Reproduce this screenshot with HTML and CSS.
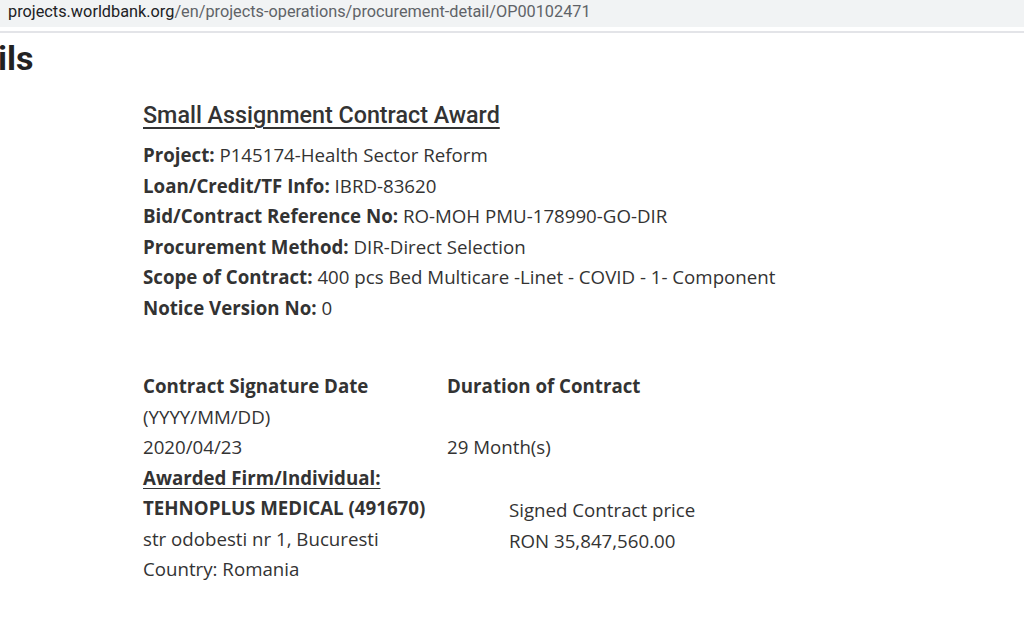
FILE: index.html
```html
<!DOCTYPE html>
<html lang="en">
<head>
<meta charset="UTF-8">
<title>Procurement Detail – OP00102471</title>
<meta name="viewport" content="width=device-width,initial-scale=1">
<link rel="stylesheet" href="styles.css">
</head>
<body>
<div class="urlbar"><span class="host">projects.worldbank.org</span>/en/projects-operations/procurement-detail/OP00102471</div>
<div class="urlbar-line"></div>
<div class="page">
  <h1 class="page-title">ils</h1>
  <div class="notice">
    <h2 class="notice-title">Small Assignment Contract Award</h2>
    <div class="field"><b>Project:</b> P145174-Health Sector Reform</div>
    <div class="field"><b>Loan/Credit/TF Info:</b> IBRD-83620</div>
    <div class="field"><b>Bid/Contract Reference No:</b> RO-MOH PMU-178990-GO-DIR</div>
    <div class="field"><b>Procurement Method:</b> DIR-Direct Selection</div>
    <div class="field"><b>Scope of Contract:</b> 400 pcs Bed Multicare -Linet - COVID - 1- Component</div>
    <div class="field"><b>Notice Version No:</b> 0</div>

    <div class="dates">
      <div>
        <div class="field"><b>Contract Signature Date</b></div>
        <div class="field">(YYYY/MM/DD)</div>
        <div class="field">2020/04/23</div>
      </div>
      <div>
        <div class="field"><b>Duration of Contract</b></div>
        <div class="field">&nbsp;</div>
        <div class="field">29 Month(s)</div>
      </div>
    </div>
    <div class="field"><b class="ul">Awarded Firm/Individual:</b></div>
    <div class="award">
      <div>
        <div class="field"><b>TEHNOPLUS MEDICAL (491670)</b></div>
        <div class="field">str odobesti nr 1, Bucuresti</div>
        <div class="field">Country: Romania</div>
      </div>
      <div class="price">
        <div class="field">Signed Contract price</div>
        <div class="field">RON 35,847,560.00</div>
      </div>
    </div>
  </div>
</div>
</body>
</html>
```

FILE: styles.css
```css
:root{
  --text:#333;
  --heading:#222;
  --bar:#f1f3f4;
  --url-dim:#5f6368;
}
*{box-sizing:border-box;}
body{margin:0;background:#fff;color:var(--text);font-family:"Open Sans",sans-serif;overflow:hidden;}
.urlbar{height:27px;background:var(--bar);padding:2px 0 0 8px;font-family:Roboto,"Liberation Sans",sans-serif;font-size:16.3px;color:var(--url-dim);white-space:nowrap;}
.urlbar .host{color:#202124;}
.urlbar-line{height:2px;margin-top:4px;background:#e3e4e8;}
.page{padding-top:2px;}
.page-title{margin:0 0 0 -2px;font-family:Roboto,sans-serif;font-size:34px;font-weight:700;color:var(--heading);line-height:46px;}
.notice{margin-left:143px;padding-top:19px;font-size:18.7px;line-height:30.5px;}
.notice-title{margin:0 0 10px;font-family:Roboto,sans-serif;font-weight:500;font-size:23.3px;line-height:30px;color:var(--text);text-decoration:underline;text-decoration-thickness:2px;text-underline-offset:4px;}
.field{white-space:nowrap;}
.field b{font-weight:700;}
.ul{text-decoration:underline;text-underline-offset:3px;}
.dates{display:grid;grid-template-columns:304px auto;margin-top:48px;}
.award{display:grid;grid-template-columns:366px auto;}
.price{padding-top:2px;}
```
